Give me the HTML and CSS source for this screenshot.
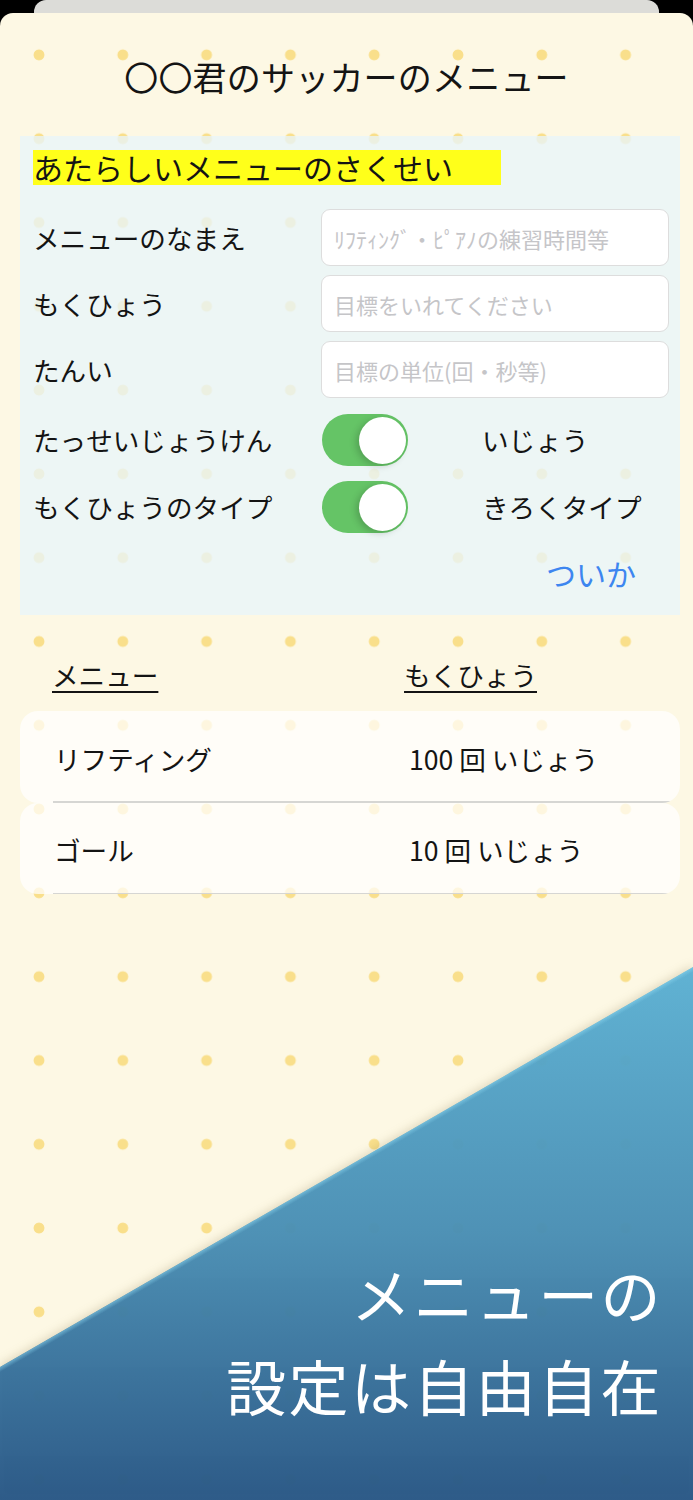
FILE: index.html
```html
<!DOCTYPE html>
<html lang="ja">
<head>
<meta charset="utf-8">
<title>〇〇君のサッカーのメニュー</title>
<link rel="stylesheet" href="styles.css">
</head>
<body>
<div class="screen">
  <div class="backsheet"></div>
  <main class="card">
    <h1 class="title">〇〇君のサッカーのメニュー</h1>
    <section class="panel">
      <h2 class="panel-heading">あたらしいメニューのさくせい</h2>
      <div class="fields">
        <label class="field"><span class="label">メニューのなまえ</span><input class="input" type="text" placeholder="ﾘﾌﾃｨﾝｸﾞ・ﾋﾟｱﾉの練習時間等"></label>
        <label class="field"><span class="label">もくひょう</span><input class="input" type="text" placeholder="目標をいれてください"></label>
        <label class="field"><span class="label">たんい</span><input class="input" type="text" placeholder="目標の単位(回・秒等)"></label>
      </div>
      <div class="switches">
        <div class="switch-row"><span class="label">たっせいじょうけん</span><span class="toggle"><span class="knob"></span></span><span class="switch-value">いじょう</span></div>
        <div class="switch-row"><span class="label">もくひょうのタイプ</span><span class="toggle"><span class="knob"></span></span><span class="switch-value">きろくタイプ</span></div>
      </div>
      <div class="actions"><button class="add" type="button">ついか</button></div>
    </section>
    <div class="list-header"><span class="col-name">メニュー</span><span class="col-goal">もくひょう</span></div>
    <ul class="list">
      <li class="list-item">
        <div class="item-body"><span class="item-name">リフティング</span><span class="item-goal">100 回 いじょう</span></div>
        <div class="item-sep"></div>
      </li>
      <li class="list-item">
        <div class="item-body"><span class="item-name">ゴール</span><span class="item-goal">10 回 いじょう</span></div>
        <div class="item-sep"></div>
      </li>
    </ul>
  </main>
  <div class="promo">
    <div class="promo-shape">
      <p class="promo-text"><span>メニューの</span><span>設定は自由自在</span></p>
    </div>
  </div>
</div>
</body>
</html>
```

FILE: styles.css
```css
html, body {
  margin: 0;
  padding: 0;
  background: #000;
}

.screen {
  position: relative;
  width: 693px;
  height: 1500px;
  overflow: hidden;
  background: #000;
  font-family: "Noto Sans CJK JP", "Noto Sans", sans-serif;
  color: #141414;
}

.backsheet {
  height: 13px;
  margin: 0 34px;
  background: #dcdcd8;
  border-radius: 12px 12px 0 0;
}

.card {
  height: 1487px;
  border-radius: 13px 13px 0 0;
  background-color: #fdf8e4;
  background-image: radial-gradient(circle, #f9df8b 5px, rgba(249, 223, 139, 0) 5.8px);
  background-size: 83.8px 83.8px;
  background-position: -2.9px 0;
  display: flex;
  flex-direction: column;
}

.title {
  margin: 0 0 39px;
  padding-top: 44px;
  height: 40px;
  line-height: 40px;
  text-align: center;
  font-size: 34px;
  font-weight: 400;
  letter-spacing: 0.2px;
}

.panel {
  margin: 0 13px 0 20px;
  padding: 14px 11px 22px 13px;
  background: rgba(232, 245, 250, 0.78);
}

.panel-heading {
  margin: 0;
  width: 468px;
  height: 35px;
  line-height: 35px;
  font-size: 30px;
  font-weight: 400;
  background: #ffff1a;
  white-space: nowrap;
}

.fields {
  display: flex;
  flex-direction: column;
  gap: 9px;
  margin-top: 24px;
}

.field {
  display: flex;
  align-items: center;
}

.label {
  flex: none;
  width: 288px;
  font-size: 26.6px;
  line-height: 36px;
  white-space: nowrap;
}

.input {
  flex: 1;
  min-width: 0;
  height: 57px;
  box-sizing: border-box;
  border: 1px solid #dddddd;
  border-radius: 9px;
  background: #fff;
  padding: 0 12px;
  font-family: inherit;
  font-size: 22px;
  color: #141414;
  outline: none;
}

.input::placeholder {
  color: #c5c5c8;
}

.switches {
  display: flex;
  flex-direction: column;
  gap: 15px;
  margin-top: 16px;
}

.switch-row {
  display: flex;
  align-items: center;
  height: 52px;
}

.switch-row .label {
  width: 289px;
}

.toggle {
  flex: none;
  width: 86px;
  height: 52px;
  box-sizing: border-box;
  padding: 0 2px;
  border-radius: 26px;
  background: #65c466;
  display: flex;
  align-items: center;
  justify-content: flex-end;
}

.knob {
  width: 47px;
  height: 47px;
  border-radius: 50%;
  background: #fff;
  box-shadow: -3px 2px 7px rgba(0, 0, 0, 0.18);
}

.switch-value {
  margin-left: 74px;
  font-size: 26.6px;
  line-height: 36px;
  white-space: nowrap;
}

.actions {
  display: flex;
  justify-content: flex-end;
  margin-top: 20px;
  padding-right: 33px;
}

.add {
  font-family: inherit;
  font-size: 30px;
  line-height: 40px;
  color: #3d86f0;
  background: none;
  border: 0;
  padding: 0;
}

.list-header {
  display: flex;
  margin: 42px 13px 0 20px;
  height: 36px;
  line-height: 36px;
  font-size: 26.6px;
}

.col-name,
.col-goal {
  text-decoration: underline;
  text-decoration-thickness: 2px;
  text-underline-offset: 5px;
}

.col-name {
  margin-left: 32px;
  margin-right: auto;
}

.col-goal {
  margin-right: 143px;
}

.list {
  list-style: none;
  margin: 18px 13px 0 20px;
  padding: 0;
  display: flex;
  flex-direction: column;
}

.list-item {
  border-radius: 18px;
  overflow: hidden;
  background: rgba(255, 255, 255, 0.72);
}

.item-body {
  display: flex;
  align-items: center;
  height: 90px;
  box-sizing: border-box;
  padding-top: 5px;
  font-size: 26.6px;
  line-height: 36px;
}

.item-name {
  margin-left: 34px;
  width: 355px;
}

.item-sep {
  height: 1.5px;
  margin-left: 33px;
  background: #d6d6d3;
}

.promo {
  position: absolute;
  left: 0;
  right: 0;
  bottom: 0;
  height: 533px;
  filter: drop-shadow(0 -2px 5px rgba(120, 100, 50, 0.22));
  pointer-events: none;
}

.promo-shape {
  height: 100%;
  box-sizing: border-box;
  clip-path: polygon(0 400px, 100% 0, 100% 100%, 0 100%);
  background:
    linear-gradient(150deg, rgba(140, 215, 240, 0) 345px, rgba(140, 215, 240, 0.45) 347px, rgba(140, 215, 240, 0) 351px),
    linear-gradient(180deg, rgba(92, 177, 211, 0.97) 0%, rgba(74, 143, 180, 0.97) 50%, rgba(42, 88, 134, 0.98) 100%);
  display: flex;
  flex-direction: column;
  align-items: flex-end;
  justify-content: flex-end;
  padding: 0 30px 69px 0;
}

.promo-text {
  margin: 0;
  display: flex;
  flex-direction: column;
  align-items: flex-end;
  color: #fff;
  font-size: 60px;
  line-height: 92px;
  letter-spacing: 2.4px;
  white-space: nowrap;
}
```
